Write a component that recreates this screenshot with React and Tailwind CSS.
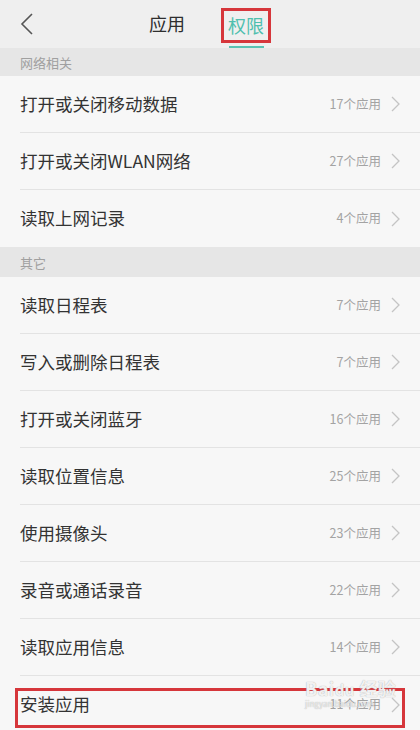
import React from 'react';

const sections = [
  {
    title: '网络相关',
    h: 'h-[28px]',
    items: [
      { name: '打开或关闭移动数据', count: 17 },
      { name: '打开或关闭WLAN网络', count: 27 },
      { name: '读取上网记录', count: 4 },
    ],
  },
  {
    title: '其它',
    h: 'h-[30px]',
    items: [
      { name: '读取日程表', count: 7 },
      { name: '写入或删除日程表', count: 7 },
      { name: '打开或关闭蓝牙', count: 16 },
      { name: '读取位置信息', count: 25 },
      { name: '使用摄像头', count: 23 },
      { name: '录音或通话录音', count: 22 },
      { name: '读取应用信息', count: 14 },
      { name: '安装应用', count: 11, boxed: true },
    ],
  },
];

const Chevron = () => (
  <svg width="9" height="16" viewBox="0 0 9 16" fill="none">
    <polyline points="1,1 8,8 1,15" stroke="#c4c4c4" strokeWidth="1.3" />
  </svg>
);

const Row = ({ item, last }) => (
  <div className="relative h-[57px] pl-5">
    <div className={`flex h-full items-center pr-5 ${last ? '' : 'border-b border-[#e3e3e3]'}`}>
      <span className="flex-1 text-[17.5px] text-[#333]">{item.name}</span>
      <span className="mr-[10px] text-[12.5px] text-[#a3a3a3]">{item.count}个应用</span>
      <Chevron />
    </div>
    {item.boxed && (
      <>
        {/* red highlight box */}
        <div className="absolute left-[15px] right-[15px] top-[12px] bottom-[5px] border-[3px] border-[#d6363b]" />
        {/* baidu watermark */}
        <div className="absolute left-[305px] top-[3px] flex flex-col items-start leading-none text-white/85 [text-shadow:0_0_1px_#9a9a9a]">
          <span className="text-[18px] font-bold tracking-wide">
            Bai<span className="text-[15px]">du</span> 经验
          </span>
          <span className="mt-[3px] text-[8px] text-white/70">jingyan.baidu.com</span>
        </div>
      </>
    )}
  </div>
);

export default function App() {
  return (
    <div
      className="h-[730px] w-[420px] overflow-hidden bg-[#f7f7f7]"
      style={{ fontFamily: '"Noto Sans CJK SC", "Noto Sans", sans-serif' }}
    >
      {/* Header */}
      <div className="grid h-12 grid-cols-[56px_1fr_56px] bg-[#efefef]">
        <div className="flex items-center pl-5">
          <svg width="13" height="22" viewBox="0 0 13 22" fill="none">
            <polyline points="12,1 2,11 12,21" stroke="#555" strokeWidth="1.6" />
          </svg>
        </div>
        <div className="flex items-start justify-center gap-[36px]">
          <span className="mt-[11px] text-[18px] leading-[24px] text-[#2e2e2e]">应用</span>
          <div className="mt-[8px] flex flex-col items-center">
            <div className="border-[3px] border-[#d6363b] px-[4px] py-[1px]">
              <span className="block text-[18px] leading-[27px] text-[#4fbfae]">权限</span>
            </div>
            <div className="mt-[3px] h-[2px] w-[35px] bg-[#5bc2b3]" />
          </div>
        </div>
        <div />
      </div>

      {sections.map((s) => (
        <div key={s.title}>
          <div className={`flex ${s.h} items-center bg-[#e6e6e6] pl-5 pt-[2px] text-[13px] text-[#a0a0a0]`}>
            {s.title}
          </div>
          {s.items.map((item, i) => (
            <Row key={item.name} item={item} last={i === s.items.length - 1} />
          ))}
        </div>
      ))}
    </div>
  );
}
